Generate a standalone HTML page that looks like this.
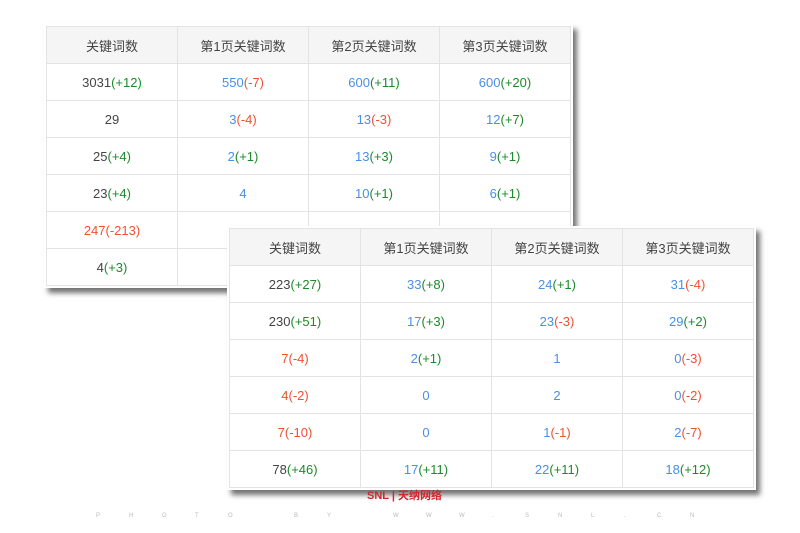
<!DOCTYPE html>
<html><head><meta charset="utf-8"><style>
body{margin:0;width:800px;height:533px;background:#fff;position:relative;overflow:hidden;font-family:"Liberation Sans","Noto Sans CJK SC",sans-serif;}
.card{position:absolute;background:#fff;padding:2px;box-shadow:4px 5px 5px rgba(0,0,0,.55);}
table{border-collapse:collapse;table-layout:fixed;}
td,th{border:1px solid #e3e3e3;text-align:center;font-size:13px;color:#444;font-weight:normal;width:130px;height:36px;padding:0;}
th{background:#f5f5f5;color:#444;}
.b{color:#4a8fe6}.r{color:#f05030}.g{color:#1d8a2a}
.foot{position:absolute;top:513px;left:96px;font-size:6px;color:#bbb;letter-spacing:0;}
.foot span{position:absolute;}
.logo{position:absolute;left:367px;top:487px;font-size:11px;font-weight:bold;color:#d0282e;}
</style></head><body>
<div class="card" style="left:44px;top:24px;">
<table>
<tr><th>关键词数</th><th>第1页关键词数</th><th>第2页关键词数</th><th>第3页关键词数</th></tr>
<tr><td>3031<span class="g">(+12)</span></td><td><span class="b">550</span><span class="r">(-7)</span></td><td><span class="b">600</span><span class="g">(+11)</span></td><td><span class="b">600</span><span class="g">(+20)</span></td></tr>
<tr><td>29</td><td><span class="b">3</span><span class="r">(-4)</span></td><td><span class="b">13</span><span class="r">(-3)</span></td><td><span class="b">12</span><span class="g">(+7)</span></td></tr>
<tr><td>25<span class="g">(+4)</span></td><td><span class="b">2</span><span class="g">(+1)</span></td><td><span class="b">13</span><span class="g">(+3)</span></td><td><span class="b">9</span><span class="g">(+1)</span></td></tr>
<tr><td>23<span class="g">(+4)</span></td><td><span class="b">4</span></td><td><span class="b">10</span><span class="g">(+1)</span></td><td><span class="b">6</span><span class="g">(+1)</span></td></tr>
<tr><td><span class="r">247(-213)</span></td><td><span class="b">3</span></td><td></td><td></td></tr>
<tr><td>4<span class="g">(+3)</span></td><td></td><td></td><td></td></tr>
</table></div>
<div class="card" style="left:227px;top:226px;">
<table>
<tr><th>关键词数</th><th>第1页关键词数</th><th>第2页关键词数</th><th>第3页关键词数</th></tr>
<tr><td>223<span class="g">(+27)</span></td><td><span class="b">33</span><span class="g">(+8)</span></td><td><span class="b">24</span><span class="g">(+1)</span></td><td><span class="b">31</span><span class="r">(-4)</span></td></tr>
<tr><td>230<span class="g">(+51)</span></td><td><span class="b">17</span><span class="g">(+3)</span></td><td><span class="b">23</span><span class="r">(-3)</span></td><td><span class="b">29</span><span class="g">(+2)</span></td></tr>
<tr><td><span class="r">7(-4)</span></td><td><span class="b">2</span><span class="g">(+1)</span></td><td><span class="b">1</span></td><td><span class="b">0</span><span class="r">(-3)</span></td></tr>
<tr><td><span class="r">4(-2)</span></td><td><span class="b">0</span></td><td><span class="b">2</span></td><td><span class="b">0</span><span class="r">(-2)</span></td></tr>
<tr><td><span class="r">7(-10)</span></td><td><span class="b">0</span></td><td><span class="b">1</span><span class="r">(-1)</span></td><td><span class="b">2</span><span class="r">(-7)</span></td></tr>
<tr><td>78<span class="g">(+46)</span></td><td><span class="b">17</span><span class="g">(+11)</span></td><td><span class="b">22</span><span class="g">(+11)</span></td><td><span class="b">18</span><span class="g">(+12)</span></td></tr>
</table></div>
<div class="logo">SNL | 天纳网络</div>
<div class="foot">
<span style="left:0">P</span><span style="left:33px">H</span><span style="left:66px">O</span><span style="left:99px">T</span><span style="left:132px">O</span><span style="left:198px">B</span><span style="left:231px">Y</span><span style="left:297px">W</span><span style="left:330px">W</span><span style="left:363px">W</span><span style="left:396px">.</span><span style="left:429px">S</span><span style="left:462px">N</span><span style="left:495px">L</span><span style="left:528px">.</span><span style="left:561px">C</span><span style="left:594px">N</span>
</div>
</body></html>
